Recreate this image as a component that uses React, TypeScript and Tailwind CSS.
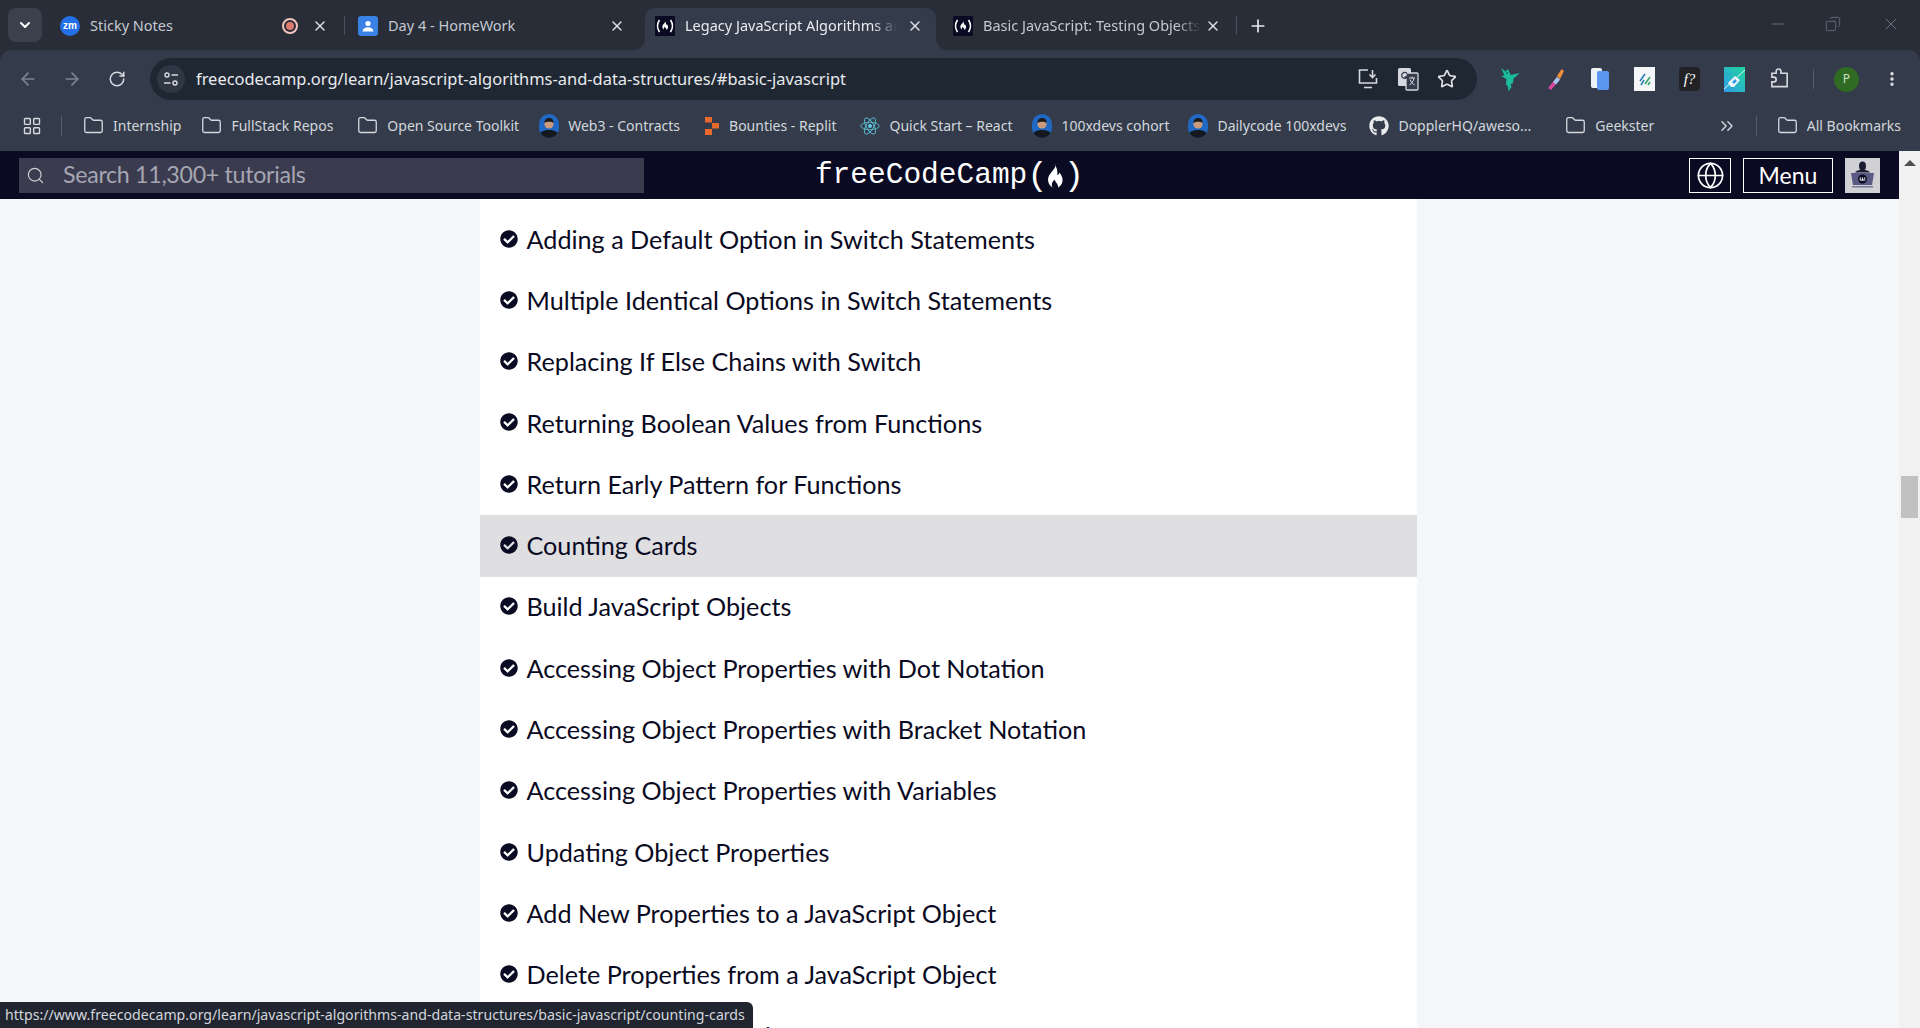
import {
  ArrowLeft,
  ArrowRight,
  ChevronDown,
  ChevronsRight,
  Copy,
  EllipsisVertical,
  Folder,
  Globe,
  LayoutGrid,
  Minus,
  Plus,
  RotateCw,
  Search,
  Star,
  X,
} from "lucide-react";
import { FaCheckCircle, FaGithub } from "react-icons/fa";

const lessons = [
  "Adding a Default Option in Switch Statements",
  "Multiple Identical Options in Switch Statements",
  "Replacing If Else Chains with Switch",
  "Returning Boolean Values from Functions",
  "Return Early Pattern for Functions",
  "Counting Cards",
  "Build JavaScript Objects",
  "Accessing Object Properties with Dot Notation",
  "Accessing Object Properties with Bracket Notation",
  "Accessing Object Properties with Variables",
  "Updating Object Properties",
  "Add New Properties to a JavaScript Object",
  "Delete Properties from a JavaScript Object",
  "Using Objects for Lookups",
];

const flamePath =
  "M12.5 3c.5 3-3 5-4.500 8-1.200 2.500-.5 6 2.500 8-1-2-.5-3.500 1.500-5.500.3 2 2.500 2.500 2.500 5.500 2.500-1.500 3.500-4 3-6.500-.5-2-1.500-3-2-4-.3 1-.8 1.500-1.500 2 .3-3-.5-5.500-2-7.500z";

function FccFavicon() {
  return (
    <svg viewBox="0 0 20 20" className="w-5 h-5 shrink-0">
      <rect width="20" height="20" rx="1" fill="#0a0a23" />
      <path d="M4.500 4C2 7.500 2 12.500 4.500 16M15.500 4c2.500 3.500 2.500 8.500 0 12" stroke="#fff" strokeWidth="1.700" fill="none" />
      <path d={flamePath} fill="#fff" transform="translate(3.200 3.200) scale(.56)" />
    </svg>
  );
}

function ZoomIcon() {
  return (
    <div className="w-5 h-5 shrink-0 rounded-full bg-[#2470e8] flex items-center justify-center text-white text-[10px] font-bold leading-none [font-family:'Liberation_Sans',sans-serif]">
      zm
    </div>
  );
}

function ClassroomIcon() {
  return (
    <svg viewBox="0 0 20 20" className="w-5 h-5 shrink-0">
      <rect width="20" height="20" rx="3" fill="#3b82e6" />
      <circle cx="10" cy="7.500" r="2.600" fill="#fff" />
      <path d="M4.500 15.500c.4-3 2.600-4.300 5.500-4.300s5.100 1.300 5.500 4.300z" fill="#fff" />
    </svg>
  );
}

function PersonAvatar() {
  return (
    <svg viewBox="0 0 20 24" className="w-[20px] h-[24px] shrink-0">
      <clipPath id="face">
        <rect width="20" height="24" rx="10" />
      </clipPath>
      <g clipPath="url(#face)">
        <rect width="20" height="24" fill="#2168c4" />
        <path d="M0 24c0-6 4-8 10-8s10 2 10 8z" fill="#15181d" />
        <circle cx="10" cy="10" r="4.600" fill="#c99a7b" />
        <path d="M5.400 9c0-3.400 2-5 4.800-5s4.400 1.800 4.400 5c-2-1.600-6.800-1.600-9.200 0z" fill="#1c1a1a" />
      </g>
    </svg>
  );
}

function ReplitIcon() {
  return (
    <svg viewBox="0 0 16 20" className="w-4 h-5 shrink-0">
      <path d="M1 1h7v5.500H1zM8 7h7v5.500H8zM1 13h7v6H1z" fill="#e8692c" />
    </svg>
  );
}

function ReactIcon() {
  return (
    <svg viewBox="0 0 24 24" className="w-5 h-5 shrink-0" fill="none" stroke="#5fc5dc" strokeWidth="1">
      <circle cx="12" cy="12" r="2" fill="#5fc5dc" />
      <ellipse cx="12" cy="12" rx="11" ry="4.500" />
      <ellipse cx="12" cy="12" rx="11" ry="4.500" transform="rotate(60 12 12)" />
      <ellipse cx="12" cy="12" rx="11" ry="4.500" transform="rotate(120 12 12)" />
    </svg>
  );
}

function TuneIcon() {
  return (
    <svg viewBox="0 0 16 16" className="w-4 h-4" fill="none" stroke="#d5d9df" strokeWidth="1.400">
      <circle cx="4" cy="4" r="2" />
      <path d="M8.500 4H15M1 12h6.500" />
      <circle cx="12" cy="12" r="2" />
    </svg>
  );
}

function InstallIcon() {
  return (
    <svg viewBox="0 0 22 22" className="w-[22px] h-[22px]" fill="none" stroke="#d5d9df" strokeWidth="1.600">
      <path d="M11 2H2.500v13h17v-5M7 19.500h8M15.500 2v7M12.500 6.500l3 3 3-3" />
    </svg>
  );
}

function TranslateIcon() {
  return (
    <svg viewBox="0 0 22 24" className="w-[22px] h-6">
      <rect x="1" y="1" width="13" height="18" rx="1.500" fill="#d5d9df" />
      <rect x="9" y="6" width="12" height="17" rx="1" fill="#343c4b" stroke="#d5d9df" strokeWidth="1.300" />
      <path d="M10 6 7 1" stroke="#d5d9df" />
      <path d="M10 6.500a3 3 0 1 0 .3 3.500H7.500" stroke="#343c4b" strokeWidth="1.300" fill="none" />
      <path d="M12 11h6M15 9.500V11M17 11c-.6 3-2.400 5.500-4.500 7M13 12.500c.8 2.300 2.500 4.500 4.800 5.500" stroke="#d5d9df" fill="none" />
    </svg>
  );
}

function DragonIcon() {
  return (
    <svg viewBox="0 0 22 26" className="w-[22px] h-[26px]">
      <path
        d="M2 2l4.500 3.500L9 3l1.500 3.500 1 2.500 9.500-2-6.500 5.500-.5 4.500-2.500 1.500 1 2.500-3 4.500-.5-5-2-2 .5-5.500L2 10l3.500-.5z"
        fill="#1abc9c"
      />
      <circle cx="8" cy="7" r=".8" fill="#0c3d33" />
    </svg>
  );
}

function DropperIcon() {
  return (
    <svg viewBox="0 0 22 24" className="w-[22px] h-6">
      <path d="M4 21l9-11 3 2.500L7 23z" fill="#d946a0" />
      <path d="M9 15l4-5 3 2.500-4 5z" fill="#9fc8e8" />
      <path d="M13 9l4-6c1-1.400 3.500.4 2.500 2l-3.500 7z" fill="#f0913a" />
    </svg>
  );
}

function DocsIcon() {
  return (
    <svg viewBox="0 0 18 22" className="w-[18px] h-[22px]">
      <rect x="0" y="0" width="11" height="20" rx="2" fill="#eef2f7" />
      <rect x="6" y="3" width="12" height="19" rx="2" fill="#5b96f0" />
    </svg>
  );
}

function SlashIcon() {
  return (
    <svg viewBox="0 0 21 24" className="w-[21px] h-6">
      <rect width="21" height="24" fill="#f4f6f8" />
      <path d="M6 14l5-7M7 18l3-5" stroke="#2d7fb8" strokeWidth="1.600" />
      <path d="M11 17l5-7M14 18l2-3" stroke="#36a368" strokeWidth="1.600" />
    </svg>
  );
}

function FormulaIcon() {
  return (
    <div className="w-[21px] h-6 bg-[#222226] rounded-sm flex items-center justify-center text-white text-[15px] italic leading-none [font-family:'Liberation_Serif',serif]">
      f?
    </div>
  );
}

function EraserIcon() {
  return (
    <svg viewBox="0 0 21 25" className="w-[21px] h-[25px]">
      <defs>
        <linearGradient id="erase" x1="0" y1="1" x2="1" y2="0">
          <stop offset="0" stopColor="#2f9be8" />
          <stop offset="1" stopColor="#20d69a" />
        </linearGradient>
      </defs>
      <rect width="21" height="25" fill="url(#erase)" />
      <path d="M4 16l7-7 5 4-6 7H7z" fill="#f4f8fb" />
      <path d="M0 22L21 3" stroke="#dff6f2" strokeWidth="1" />
      <path d="M8 15l3-3 2 2-3 3z" fill="#2f9be8" />
    </svg>
  );
}

function PuzzleIcon() {
  return (
    <svg viewBox="0 0 22 24" className="w-[21px] h-6" fill="none" stroke="#d5d9df" strokeWidth="1.700">
      <path d="M3 6h4.500V4a2.500 2.500 0 0 1 5 0v2H19v14H3v-5h2a2.500 2.500 0 0 0 0-5H3z" />
    </svg>
  );
}

function NavAvatar() {
  return (
    <div className="w-[35px] h-[35px] bg-[#d0d0d5] flex items-center justify-center">
      <svg viewBox="0 0 35 35" className="w-[35px] h-[35px]">
        <ellipse cx="17.500" cy="8" rx="3.500" ry="4.500" fill="#1b1b32" />
        <path d="M10 14.500c1-2 4-2.500 7.500-2.500s6.500.5 7.500 2.500z" fill="#1b1b32" />
        <path d="M6 15h23l-2 12H8z" fill="#5a5a85" />
        <rect x="7" y="28" width="21" height="1.500" fill="#7a7a9a" />
        <circle cx="17.500" cy="21" r="4.500" fill="#0a0a23" />
        <path d="M15.500 19c-.8 1.300-.8 2.700 0 4M19.500 19c.8 1.300.8 2.700 0 4M17.500 19.500l1 3h-2z" stroke="#fff" strokeWidth=".5" fill="#fff" />
      </svg>
    </div>
  );
}

function Tab({
  icon,
  title,
  active,
  className,
  closeClass,
  fade,
  extra,
}: {
  icon: React.ReactNode;
  title: string;
  active?: boolean;
  className: string;
  closeClass: string;
  fade?: boolean;
  extra?: React.ReactNode;
}) {
  return (
    <div
      className={`relative h-[42px] pb-[6px] flex items-center shrink-0 ${className} ${
        active ? "bg-[#343c4b] rounded-t-[10px] text-[#e8eaed]" : "text-[#c4c9d1]"
      }`}
    >
      {active && (
        <>
          <div className="absolute bottom-0 -left-[10px] w-[10px] h-[10px] bg-[radial-gradient(circle_at_0_0,transparent_9.500px,#343c4b_10px)]" />
          <div className="absolute bottom-0 -right-[10px] w-[10px] h-[10px] bg-[radial-gradient(circle_at_100%_0,transparent_9.500px,#343c4b_10px)]" />
        </>
      )}
      {icon}
      <span
        className={`ml-[10px] flex-1 min-w-0 overflow-hidden whitespace-nowrap text-[14.500px] ${
          fade ? "[mask-image:linear-gradient(to_right,black_88%,transparent_99%)]" : ""
        }`}
      >
        {title}
      </span>
      {extra}
      <X className={`w-4 h-4 shrink-0 text-[#dfe2e7] ${closeClass}`} strokeWidth={2} />
    </div>
  );
}

function Bookmark({ icon, label, className }: { icon: React.ReactNode; label: string; className?: string }) {
  return (
    <div className={`flex items-center gap-[9px] shrink-0 ${className ?? ""}`}>
      {icon}
      <span className="text-[14px] text-[#d3d7dd] whitespace-nowrap">{label}</span>
    </div>
  );
}

const folder = <Folder className="w-[21px] h-[21px] text-[#d5d9df]" strokeWidth={1.5} />;

export default function App() {
  return (
    <div className="h-screen overflow-hidden flex flex-col bg-[#f5f6f7] [font-family:'Noto_Sans',sans-serif]">
      {/* browser chrome */}
      <div className="shrink-0 bg-[#282d38]">
        {/* tab strip */}
        <div className="h-[50px] flex items-end relative">
          <div className="ml-2 mb-2 w-[34px] h-[34px] rounded-lg bg-[#3a404c] flex items-center justify-center shrink-0">
            <ChevronDown className="w-4 h-4 text-white" strokeWidth={3} />
          </div>
          <Tab
            icon={<ZoomIcon />}
            title="Sticky Notes"
            className="w-[302px] pl-[18px]"
            closeClass="mr-4"
            extra={
              <div className="w-4 h-4 rounded-full border-2 border-[#f2c4bc] mr-[14px] shrink-0 flex items-center justify-center">
                <div className="w-2 h-2 rounded-full bg-[#e07a6e]" />
              </div>
            }
          />
          <div className="w-px h-[19px] bg-[#4a505c] mb-[15px] shrink-0" />
          <Tab icon={<ClassroomIcon />} title="Day 4 - HomeWork" className="w-[300px] pl-[13px]" closeClass="mr-5" />
          <Tab
            icon={<FccFavicon />}
            title="Legacy JavaScript Algorithms and Data"
            active
            fade
            className="w-[291px] pl-[10px]"
            closeClass="mr-[13px] ml-2"
          />
          <Tab
            icon={<FccFavicon />}
            title="Basic JavaScript: Testing Objects for Properties"
            fade
            className="w-[300px] pl-[17px]"
            closeClass="mr-[15px] ml-[2px]"
          />
          <div className="w-px h-[19px] bg-[#4a505c] mb-[15px] shrink-0" />
          <Plus className="w-5 h-5 text-[#e8eaed] ml-[11px] mb-[14px] shrink-0" strokeWidth={2} />
          <div className="ml-auto self-start flex items-center h-[48px] text-[#7d838e]">
            <Minus className="w-[18px] h-[18px] mr-[38px]" strokeWidth={1} />
            <Copy className="w-4 h-4 mr-[40px] -scale-x-100" strokeWidth={1} />
            <X className="w-[20px] h-[20px] mr-[19px]" strokeWidth={1} />
          </div>
        </div>

        {/* toolbar */}
        <div className="h-[50px] pt-2 bg-[#343c4b] rounded-t-[12px] flex items-center pl-[18px]">
          <ArrowLeft className="w-5 h-5 text-[#7e8592] shrink-0" strokeWidth={2} />
          <ArrowRight className="w-5 h-5 text-[#7e8592] ml-6 shrink-0" strokeWidth={2} />
          <RotateCw className="w-[18px] h-[18px] text-[#d5d9df] ml-[26px] shrink-0" strokeWidth={2} />
          <div className="ml-6 w-[1327px] h-[42px] rounded-full bg-[#1f2733] flex items-center pl-[7px] pr-5 shrink-0">
            <div className="w-[28px] h-[28px] rounded-full bg-[#2f3644] flex items-center justify-center shrink-0">
              <TuneIcon />
            </div>
            <span className="ml-[11px] text-[16.450px] text-[#e8eaed] whitespace-nowrap">
              freecodecamp.org/learn/javascript-algorithms-and-data-structures/#basic-javascript
            </span>
            <div className="ml-auto flex items-center gap-[18px]">
              <InstallIcon />
              <TranslateIcon />
              <Star className="w-5 h-5 text-[#dfe2e7]" strokeWidth={2} />
            </div>
          </div>
          <div className="ml-[10px] flex items-center shrink-0">
            <div className="w-[45px] flex justify-center"><DragonIcon /></div>
            <div className="w-[45px] flex justify-center"><DropperIcon /></div>
            <div className="w-[45px] flex justify-center"><DocsIcon /></div>
            <div className="w-[45px] flex justify-center"><SlashIcon /></div>
            <div className="w-[45px] flex justify-center"><FormulaIcon /></div>
            <div className="w-[45px] flex justify-center"><EraserIcon /></div>
            <div className="w-[45px] flex justify-center"><PuzzleIcon /></div>
          </div>
          <div className="ml-[11px] w-px h-[20px] bg-[#565d6a] shrink-0" />
          <div className="ml-5 w-[25px] h-[25px] rounded-full bg-[#2f6b22] text-[#cfe3c8] text-[12px] flex items-center justify-center shrink-0">
            P
          </div>
          <EllipsisVertical className="ml-[24px] w-[18px] h-[18px] text-[#e0e3e8] shrink-0" strokeWidth={2.5} />
        </div>

        {/* bookmarks bar */}
        <div className="h-[51px] bg-[#343c4b] flex items-center pl-[22px]">
          <LayoutGrid className="w-5 h-5 text-[#d5d9df] shrink-0" strokeWidth={1.7} />
          <div className="ml-[19px] w-px h-[20px] bg-[#565d6a] shrink-0" />
          <div className="ml-[21px] flex items-center gap-[22px]">
            <Bookmark icon={folder} label="Internship" className="-mr-[2px]" />
            <Bookmark icon={folder} label="FullStack Repos" className="mr-[2px]" />
            <Bookmark icon={folder} label="Open Source Toolkit" className="-mr-[2px]" />
            <Bookmark icon={<PersonAvatar />} label="Web3 - Contracts" className="mr-[2px]" />
            <Bookmark icon={<ReplitIcon />} label="Bounties - Replit" className="mr-[2px]" />
            <Bookmark icon={<ReactIcon />} label="Quick Start – React" className="-mr-[2px]" />
            <Bookmark icon={<PersonAvatar />} label="100xdevs cohort" className="-mr-[3px]" />
            <Bookmark icon={<PersonAvatar />} label="Dailycode 100xdevs" className="mr-px" />
            <Bookmark icon={<FaGithub className="w-5 h-5 text-[#e8eaed]" />} label="DopplerHQ/aweso..." className="mr-[12px]" />
            <Bookmark icon={folder} label="Geekster" />
          </div>
          <ChevronsRight className="ml-auto w-5 h-5 text-[#d5d9df] shrink-0" strokeWidth={1.7} />
          <div className="ml-[19px] w-px h-[20px] bg-[#565d6a] shrink-0" />
          <Bookmark icon={folder} label="All Bookmarks" className="ml-[20px] mr-[19px]" />
        </div>
      </div>

      {/* page */}
      <div className="flex-1 min-h-0 flex relative">
        <div className="flex-1 min-w-0 flex flex-col">
          <nav className="h-[48px] shrink-0 bg-[#0a0a23] grid grid-cols-[1fr_auto_1fr] items-center [font-family:'Lato',sans-serif]">
            <div className="ml-[19px] w-[625px] h-[35px] bg-[#3b3b4f] flex items-center pl-[7px]">
              <Search className="w-[19px] h-[19px] text-[#d0d0d5]" strokeWidth={1.5} />
              <span className="ml-[18px] -mt-[2px] text-[23.200px] tracking-[-0.3px] text-[#a6a6b2]">Search 11,300+ tutorials</span>
            </div>
            <div className="flex items-center mt-[2px] text-white text-[29.500px] leading-none [font-family:'Liberation_Mono',monospace]">
              <span>freeCodeCamp</span>
              <span className="text-[34px]">(</span>
              <svg viewBox="6 2 14 18" className="w-[20px] h-[26px] -mx-[2px]">
                <path d={flamePath} fill="#fff" />
              </svg>
              <span className="text-[34px]">)</span>
            </div>
            <div className="flex items-center justify-end gap-3 pr-[19px]">
              <div className="w-[42px] h-[35px] border border-white flex items-center justify-center">
                <Globe className="w-[29px] h-[29px] text-white" strokeWidth={1.4} />
              </div>
              <div className="w-[90px] h-[35px] border border-white flex items-center justify-center text-white text-[23px]">
                Menu
              </div>
              <NavAvatar />
            </div>
          </nav>

          <div className="flex-1 min-h-0 overflow-hidden flex justify-center pr-[2px]">
            <ul className="w-[937px] bg-white pt-[9.900px] [font-family:'Lato',sans-serif] text-[#0a0a23] shrink-0 ml-[-1px]">
              {lessons.map((lesson) => (
                <li
                  key={lesson}
                  className={`h-[61.300px] flex items-center pl-5 ${lesson === "Counting Cards" ? "bg-[#dfdfe2]" : ""}`}
                >
                  <FaCheckCircle className="w-[18px] h-[18px] shrink-0 -mt-[2px]" />
                  <span className="ml-[9px] text-[25.200px] whitespace-nowrap">{lesson}</span>
                </li>
              ))}
            </ul>
          </div>
        </div>

        {/* scrollbar */}
        <div className="w-[21px] shrink-0 bg-[#f1f1f1] flex flex-col items-center">
          <div className="mt-[9px] w-0 h-0 border-x-[6px] border-x-transparent border-b-[6px] border-b-[#505050]" />
          <div className="mt-[310px] w-[17px] h-[42px] bg-[#c1c1c1]" />
        </div>

        {/* link status bubble */}
        <div className="absolute left-0 bottom-0 w-[753px] h-[26px] bg-[#202530] rounded-tr-[6px] flex items-center pl-[5px] text-[14.150px] text-[#d3d7dd] whitespace-nowrap">
          https://www.freecodecamp.org/learn/javascript-algorithms-and-data-structures/basic-javascript/counting-cards
        </div>
      </div>
    </div>
  );
}
